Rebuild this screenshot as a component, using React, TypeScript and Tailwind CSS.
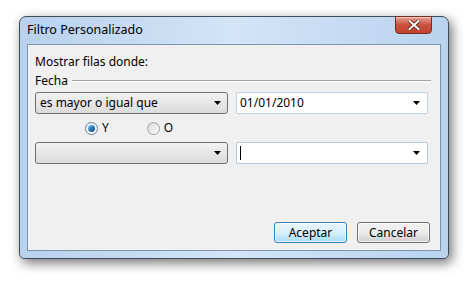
import React from "react";

function Arrow() {
  return (
    <svg width="7" height="4" viewBox="0 0 7 4" className="block">
      <path d="M0 0 H7 L3.5 4 Z" fill="#000" />
    </svg>
  );
}

export default function App() {
  const font = { fontFamily: '"Noto Sans", "Open Sans", sans-serif' };
  return (
    <div className="w-[469px] h-[282px] bg-white pl-[19px] pt-[16px]" style={font}>
      <div className="relative w-[430px] h-[243px] rounded-t-[7px] rounded-b-[5px] border border-[#3f4c5a] bg-gradient-to-r from-[#b8d1ec] via-[#d3e5f7] to-[#b9d3ee] shadow-[3px_4px_12px_rgba(0,0,0,0.55)] flex flex-col">
        <div className="h-[27px] flex items-center pl-[7px] text-[12.5px] text-black">
          Filtro Personalizado
        </div>
        <div className="absolute right-[16px] -top-px w-[37px] h-[18px] rounded-b-[4px] border border-[#7a2a20] bg-gradient-to-b from-[#e8a093] via-[#c9503c] to-[#c2452d] flex items-center justify-center shadow-[inset_0_1px_0_rgba(255,255,255,0.5)]">
          <svg width="12" height="10" viewBox="0 0 12 10">
            <path d="M1.5 1 L10.5 9 M10.5 1 L1.5 9" stroke="#4a1a10" strokeWidth="3.4" strokeLinecap="square" />
            <path d="M1.5 1 L10.5 9 M10.5 1 L1.5 9" stroke="#ffffff" strokeWidth="2" strokeLinecap="square" />
          </svg>
        </div>
        <div className="flex-1 mx-[7px] mb-[7px] border border-[#7f93aa] bg-[#f0f0f0] flex flex-col px-[7px] pt-[9px] text-[12px] text-black">
          <div className="h-[16px] leading-[16px]">Mostrar filas donde:</div>
          <div className="flex items-center h-[16px] mt-[3px]">
            <span className="leading-[16px]">Fecha</span>
            <div className="flex-1 ml-[4px] mr-[2px] h-[2px] border-t border-[#a0a0a0] border-b-white border-b" />
          </div>
          <div className="flex gap-[8px] mt-[3px]">
            <div className="w-[193px] h-[22px] rounded-[3px] border border-[#707070] bg-gradient-to-b from-[#f2f2f2] to-[#dbdbdb] flex items-center pl-[4px] pr-[6px]">
              <span className="flex-1">es mayor o igual que</span>
              <Arrow />
            </div>
            <div className="w-[192px] h-[22px] rounded-[2px] border border-[#c5d2df] bg-white flex items-center pl-[3px] pr-[7px]">
              <span className="flex-1">01/01/2010</span>
              <Arrow />
            </div>
          </div>
          <div className="flex items-center h-[28px] pl-[50px]">
            <div className="w-[13px] h-[13px] rounded-full border border-[#6b7f94] bg-gradient-to-b from-[#e6eef6] to-[#ffffff] flex items-center justify-center">
              <div className="w-[7px] h-[7px] rounded-full bg-gradient-to-br from-[#8ad0f6] via-[#2a7ab4] to-[#0f4d84]" />
            </div>
            <span className="ml-[4px]">Y</span>
            <div className="ml-[38px] w-[13px] h-[13px] rounded-full border border-[#9aa3ab] bg-gradient-to-br from-[#d8d8d8] to-[#fbfbfb]" />
            <span className="ml-[4px]">O</span>
          </div>
          <div className="flex gap-[8px]">
            <div className="w-[193px] h-[22px] rounded-[3px] border border-[#707070] bg-gradient-to-b from-[#f2f2f2] to-[#dbdbdb] flex items-center pl-[4px] pr-[6px]">
              <span className="flex-1" />
              <Arrow />
            </div>
            <div className="w-[192px] h-[22px] rounded-[2px] border border-[#b8c9da] bg-white flex items-center pl-[3px] pr-[7px]">
              <span className="flex-1">
                <span className="block w-px h-[14px] bg-black" />
              </span>
              <Arrow />
            </div>
          </div>
          <div className="flex-1" />
          <div className="flex justify-end gap-[10px] mb-[7px] pr-[3px]">
            <div className="w-[73px] h-[21px] rounded-[3px] border border-[#3c7fb1] bg-gradient-to-b from-[#eaf6fd] via-[#d9f0fc] to-[#a7d9f5] flex items-center justify-center shadow-[inset_0_0_0_1px_rgba(255,255,255,0.7)]">
              Aceptar
            </div>
            <div className="w-[73px] h-[21px] rounded-[3px] border border-[#707070] bg-gradient-to-b from-[#f2f2f2] via-[#ebebeb] to-[#cfcfcf] flex items-center justify-center shadow-[inset_0_0_0_1px_rgba(255,255,255,0.7)]">
              Cancelar
            </div>
          </div>
        </div>
      </div>
    </div>
  );
}
